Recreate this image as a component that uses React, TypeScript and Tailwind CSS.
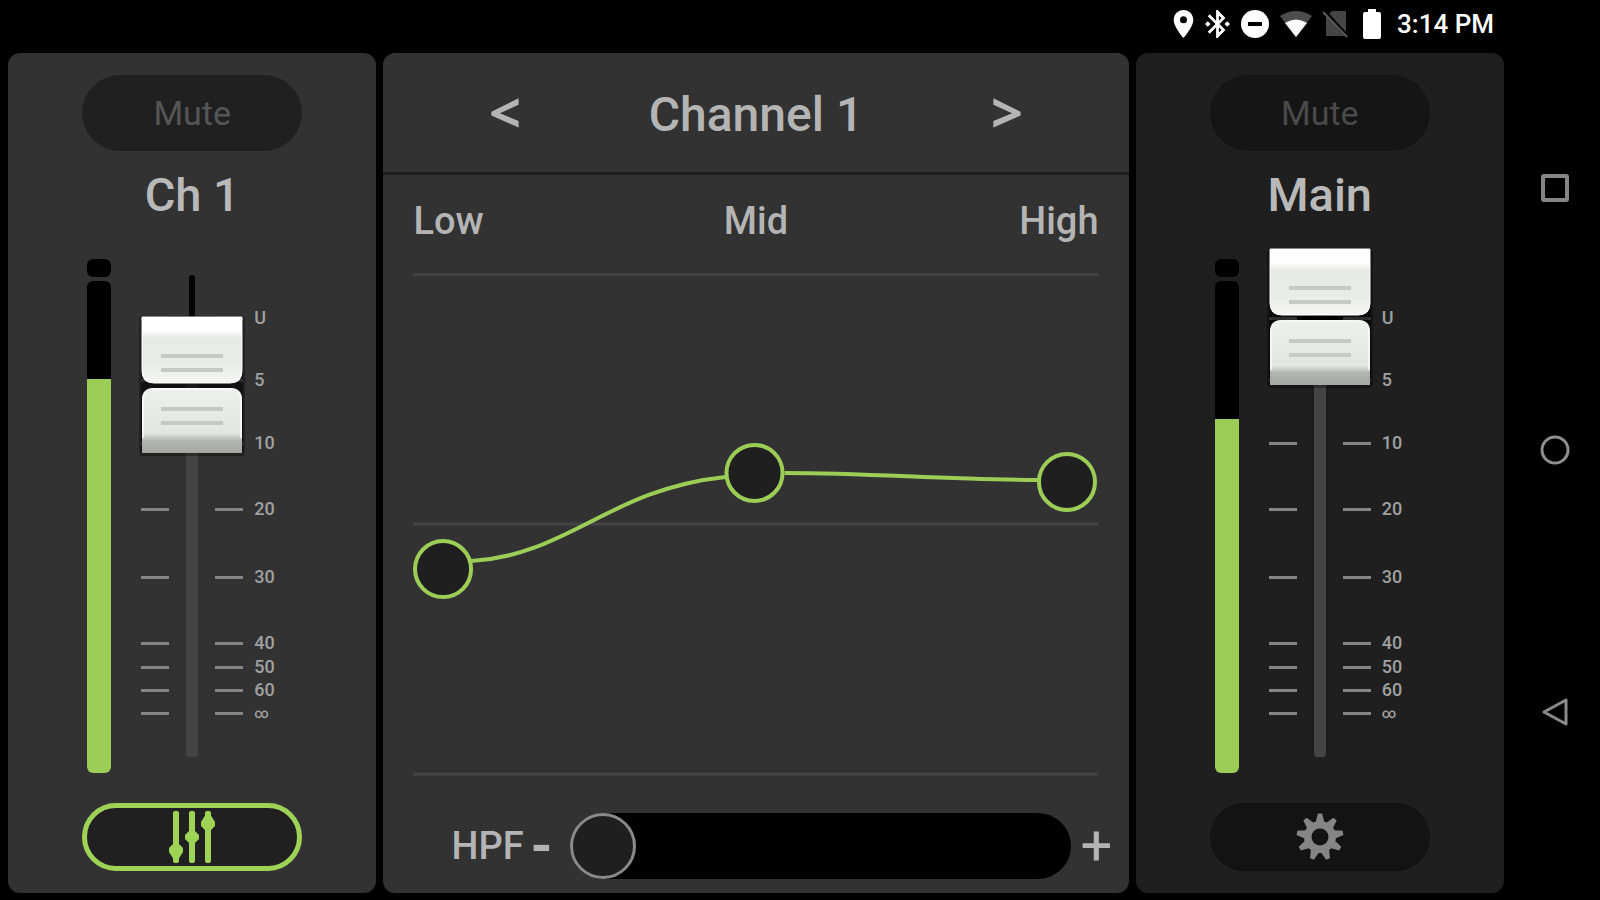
import React, { useState } from 'react';

interface ScaleMark {
  label: string;
  gap: number;
}

// gap = distance to the next mark, relative to the whole fader travel
const SCALE: ScaleMark[] = [
  { label: 'U', gap: 62 },
  { label: '5', gap: 63 },
  { label: '10', gap: 66 },
  { label: '20', gap: 68 },
  { label: '30', gap: 66 },
  { label: '40', gap: 24 },
  { label: '50', gap: 23 },
  { label: '60', gap: 23 },
  { label: '∞', gap: 44 },
];

const gearPoints = () => {
  const points: string[] = [];
  const teeth = 9;
  for (let i = 0; i < teeth; i++) {
    const center = (i / teeth) * Math.PI * 2 - Math.PI / 2;
    const corners: [number, number][] = [
      [-0.26, 16],
      [-0.09, 23.5],
      [0.09, 23.5],
      [0.26, 16],
    ];
    corners.forEach(([offset, r]) => {
      points.push(`${(24 + r * Math.cos(center + offset)).toFixed(2)},${(24 + r * Math.sin(center + offset)).toFixed(2)}`);
    });
  }
  return points.join(' ');
};

const GearIcon = () => (
  <svg width="48" height="48" viewBox="0 0 48 48" aria-hidden="true">
    <polygon points={gearPoints()} fill="#858585" />
    <circle cx="24" cy="24" r="8.5" fill="#131313" />
  </svg>
);

const SlidersIcon = () => (
  <svg width="48" height="52" viewBox="0 0 48 52" fill="#9fd356" aria-hidden="true">
    <rect x="5" y="0" width="6" height="52" rx="2" />
    <rect x="21" y="0" width="6" height="52" rx="2" />
    <rect x="37" y="0" width="6" height="52" rx="2" />
    <path d="M1 37l4-4h6l4 4v4l-5 8H6l-5-8z" />
    <path d="M17 24l4-4h6l4 4v4l-4 4h-6l-4-4z" />
    <path d="M33 11l5-8h4l5 8v4l-4 4h-6l-4-4z" />
  </svg>
);

const FaderCap = () => (
  <svg width="102" height="140" viewBox="0 0 102 140" className="block overflow-visible" aria-hidden="true">
    <defs>
      <linearGradient id="cap-top" x1="0" y1="0" x2="0" y2="1">
        <stop offset="0" stopColor="#ffffff" />
        <stop offset="0.2" stopColor="#ffffff" />
        <stop offset="0.32" stopColor="#e8eae6" />
        <stop offset="0.7" stopColor="#e9ebe7" />
        <stop offset="1" stopColor="#f6f7f5" />
      </linearGradient>
      <linearGradient id="cap-bottom" x1="0" y1="0" x2="0" y2="1">
        <stop offset="0" stopColor="#eef0ec" />
        <stop offset="0.7" stopColor="#e2e5e1" />
        <stop offset="0.82" stopColor="#b0b3ae" />
        <stop offset="1" stopColor="#a5a7a3" />
      </linearGradient>
    </defs>
    <rect x="-2" y="0" width="106" height="140" rx="4" fill="#000000" opacity="0.3" />
    <rect x="0" y="0" width="102" height="137" fill="#000000" opacity="0.5" />
    <path d="M1 1h100v54q0 12-12 12H13Q1 67 1 55z" fill="url(#cap-top)" stroke="#ffffff" strokeWidth="1" />
    <path d="M1 137V84q0-12 12-12h76q12 0 12 12v53z" fill="url(#cap-bottom)" />
    <path d="M2 122V84q0-11 11-11h76q11 0 11 11v38" fill="none" stroke="#ffffff" strokeWidth="2" opacity="0.6" />
    <g fill="#c6c9c4">
      <rect x="20" y="38" width="62" height="4" />
      <rect x="20" y="52" width="62" height="4" />
      <rect x="20" y="91" width="62" height="4" />
      <rect x="20" y="105" width="62" height="4" />
    </g>
  </svg>
);

interface StripProps {
  name: string;
  initial: number;
  level: number;
  variant: 'channel' | 'main';
}

const ChannelStrip: React.FC<StripProps> = ({ name, initial, level, variant }) => {
  const [value, setValue] = useState(initial);
  const [muted, setMuted] = useState(false);
  const isMain = variant === 'main';

  return (
    <section
      className={`flex flex-col items-center rounded-xl pt-[22px] pb-[22px] ${isMain ? 'bg-[#1f1f1f]' : 'bg-[#323232]'}`}
    >
      <button
        type="button"
        aria-pressed={muted}
        onClick={() => setMuted(!muted)}
        className={`h-[76px] w-[220px] rounded-full text-[34px] ${isMain ? 'bg-[#151515] text-[#4a4a4a]' : 'bg-[#202020] text-[#555555]'}`}
      >
        Mute
      </button>
      <h2 className="mt-5 text-[47px] leading-[48px] font-medium text-[#b9b9b9]">{name}</h2>

      <div className="mt-10 flex w-[210px] flex-1">
        {/* level meter */}
        <div className="flex w-6 flex-col gap-1">
          <div className="h-[18px] rounded-md bg-black" />
          <div className="flex flex-1 flex-col justify-end overflow-hidden rounded-md bg-black">
            <div className="bg-[#9ccd56]" style={{ height: `${level}%` }} />
          </div>
        </div>

        {/* fader */}
        <div className="my-4 ml-[30px] grid flex-1 grid-cols-[102px_1fr]">
          <div className="col-start-1 row-start-1 flex flex-col items-center">
            <div className="w-[6px] grow-43 basis-0 rounded-t bg-black" />
            <div className="w-3 grow-439 basis-0 rounded-b-sm bg-[#444444]" />
          </div>
          <ul className="col-span-2 col-start-1 row-start-1 flex flex-col">
            <li className="grow-43 basis-0" />
            {SCALE.map((mark) => (
              <li key={mark.label} className="flex h-0 basis-0 items-start" style={{ flexGrow: mark.gap }}>
                <div className="flex h-0 items-center">
                  <span className="h-[3px] w-7 bg-[#858585]" />
                  <span className={`h-1 w-[46px] ${mark.label === 'U' ? 'bg-black' : ''}`} />
                  <span className="h-[3px] w-7 bg-[#858585]" />
                  <span className={`ml-[11px] leading-none font-medium text-[#a0a0a0] ${mark.label === '∞' ? 'text-sm' : 'text-lg'}`}>
                    {mark.label}
                  </span>
                </div>
              </li>
            ))}
          </ul>
          <div className="relative col-start-1 row-start-1">
            <div className="absolute left-0 -translate-y-1/2" style={{ top: `${100 - value}%` }}>
              <FaderCap />
            </div>
            <input
              type="range"
              aria-label={`${name} level`}
              value={value}
              onChange={(e) => setValue(Number(e.target.value))}
              className="absolute inset-0 h-full w-full cursor-pointer opacity-0 [direction:rtl] [writing-mode:vertical-lr]"
            />
          </div>
        </div>
      </div>

      {isMain ? (
        <button type="button" aria-label="Settings" className="mt-[30px] flex h-[68px] w-[220px] items-center justify-center rounded-full bg-[#131313]">
          <GearIcon />
        </button>
      ) : (
        <button
          type="button"
          aria-label="Equalizer"
          className="mt-[30px] flex h-[68px] w-[220px] items-center justify-center rounded-full border-[5px] border-[#9fd356] bg-[#202020]"
        >
          <SlidersIcon />
        </button>
      )}
    </section>
  );
};

const EqGraph = () => (
  <svg viewBox="0 0 684 504" className="h-full w-full" fill="none" role="img" aria-label="EQ curve">
    <g stroke="#444444" strokeWidth="3">
      <path d="M0 2h684" />
      <path d="M0 251h684" />
      <path d="M0 501h684" />
    </g>
    <g stroke="#9ccd56" strokeWidth="4">
      <path d="M58 288C156 282 196 216 312 204" />
      <path d="M371 200C460 200 530 207 625 207" />
      <g fill="#1f1f1f">
        <circle cx="30" cy="296" r="28" />
        <circle cx="341" cy="200" r="28" />
        <circle cx="653" cy="209" r="28" />
      </g>
    </g>
  </svg>
);

const EqPanel = () => {
  const [hpf, setHpf] = useState(0);

  return (
    <section className="flex flex-col rounded-xl bg-[#323232] pb-[14px] text-[#b4b4b4]">
      <header className="flex h-[122px] items-center justify-center gap-[110px] border-b-[3px] border-[#1c1c1c]">
        <button type="button" aria-label="Previous channel" className="w-12 pb-1 font-['Open_Sans',sans-serif] text-[56px] leading-none font-bold">
          &lt;
        </button>
        <h1 className="w-[234px] pt-1 text-center text-[48px] font-medium whitespace-nowrap">Channel 1</h1>
        <button type="button" aria-label="Next channel" className="w-12 pb-1 font-['Open_Sans',sans-serif] text-[56px] leading-none font-bold">
          &gt;
        </button>
      </header>

      <div className="mt-[25px] grid h-[42px] grid-cols-3 px-[30px] text-[38px] leading-[42px] font-medium">
        <span>Low</span>
        <span className="text-center">Mid</span>
        <span className="text-right">High</span>
      </div>

      <div className="mt-[30px] min-h-0 flex-1 px-[30px]">
        <EqGraph />
      </div>

      <div className="mt-[35px] flex items-center pr-3 pl-[68px]">
        <label htmlFor="hpf" className="text-[38px] leading-none font-medium">
          HPF
        </label>
        <button type="button" aria-label="Decrease HPF" onClick={() => setHpf(Math.max(0, hpf - 1))} className="w-9 text-center text-[56px] leading-none font-bold">
          -
        </button>
        <input
          id="hpf"
          type="range"
          value={hpf}
          onChange={(e) => setHpf(Number(e.target.value))}
          className="ml-2.5 h-[66px] min-w-0 flex-1 appearance-none rounded-full bg-black [&::-webkit-slider-thumb]:h-[66px] [&::-webkit-slider-thumb]:w-[66px] [&::-webkit-slider-thumb]:appearance-none [&::-webkit-slider-thumb]:rounded-full [&::-webkit-slider-thumb]:border-[3px] [&::-webkit-slider-thumb]:border-[#8a8a8a] [&::-webkit-slider-thumb]:bg-[#1f1f1f]"
        />
        <button type="button" aria-label="Increase HPF" onClick={() => setHpf(Math.min(100, hpf + 1))} className="ml-1.5 w-10 text-center text-[56px] leading-none">
          +
        </button>
      </div>
    </section>
  );
};

const StatusBar = () => (
  <div className="flex h-[53px] items-center justify-end gap-[11px] pr-2.5 pb-1.5 text-white">
    <svg width="21" height="28" viewBox="5 2 14 20" fill="currentColor" aria-hidden="true">
      <path d="M12 2C8.13 2 5 5.13 5 9c0 5.25 7 13 7 13s7-7.75 7-13c0-3.87-3.13-7-7-7zm0 9.5a2.5 2.5 0 0 1 0-5 2.5 2.5 0 0 1 0 5z" />
    </svg>
    <svg width="25" height="28" viewBox="3 2 18 20" fill="currentColor" aria-hidden="true">
      <path d="M7 12l-2-2-2 2 2 2 2-2zm10.71-4.29L12 2h-1v7.59L6.41 5 5 6.41 10.59 12 5 17.59 6.41 19 11 14.41V22h1l5.71-5.71-4.3-4.29 4.3-4.29zM13 5.83l1.88 1.88L13 9.59V5.83zm1.88 10.46L13 18.17v-3.76l1.88 1.88zM19 10l-2 2 2 2 2-2-2-2z" />
    </svg>
    <svg width="28" height="28" viewBox="0 0 28 28" aria-hidden="true">
      <circle cx="14" cy="14" r="14" fill="currentColor" />
      <rect x="7" y="12" width="14" height="4" fill="#000000" />
    </svg>
    <svg width="32" height="26" viewBox="0 0 32 26" aria-hidden="true">
      <path d="M0 5Q16-5 32 5L16 26z" fill="#4d4d4d" />
      <path d="M5 12Q16 5 27 12L16 26z" fill="currentColor" />
    </svg>
    <svg width="26" height="28" viewBox="0 0 26 28" aria-hidden="true">
      <path d="M9 1h14v25H3V7z" fill="#454545" />
      <path d="M0 0l25 27" stroke="#000000" strokeWidth="4" />
      <path d="M0 2l24 25" stroke="#5a5a5a" strokeWidth="2" />
    </svg>
    <svg width="26" height="30" viewBox="1 0 26 30" fill="currentColor" aria-hidden="true">
      <path d="M9 0h8v3h3q2 0 2 2v23q0 2-2 2H6q-2 0-2-2V5q0-2 2-2h3z" />
    </svg>
    <span className="text-[26px] leading-none font-medium">3:14 PM</span>
  </div>
);

const NavBar = () => (
  <nav className="flex w-24 flex-col items-center justify-around py-[58px] pl-1.5">
    <button type="button" aria-label="Recent apps">
      <svg width="28" height="28" viewBox="0 0 28 28" fill="none" stroke="#858585" strokeWidth="4">
        <rect x="2" y="2" width="24" height="24" rx="1" />
      </svg>
    </button>
    <button type="button" aria-label="Home">
      <svg width="30" height="30" viewBox="0 0 30 30" fill="none" stroke="#8f8f8f" strokeWidth="3">
        <circle cx="15" cy="15" r="13" />
      </svg>
    </button>
    <button type="button" aria-label="Back">
      <svg width="28" height="28" viewBox="0 0 28 28" fill="none" stroke="#8a8a8a" strokeWidth="3" strokeLinejoin="round">
        <path d="M25 2v24L3 14z" />
      </svg>
    </button>
  </nav>
);

export default function App() {
  return (
    <div className="flex min-h-screen bg-black font-[Roboto,sans-serif]">
      <div className="flex flex-1 flex-col">
        <StatusBar />
        <main className="grid flex-1 grid-cols-[368fr_744fr_368fr] gap-[7px] pb-[7px] pl-2">
          <ChannelStrip name="Ch 1" initial={77} level={80} variant="channel" />
          <EqPanel />
          <ChannelStrip name="Main" initial={91} level={72} variant="main" />
        </main>
      </div>
      <NavBar />
    </div>
  );
}
